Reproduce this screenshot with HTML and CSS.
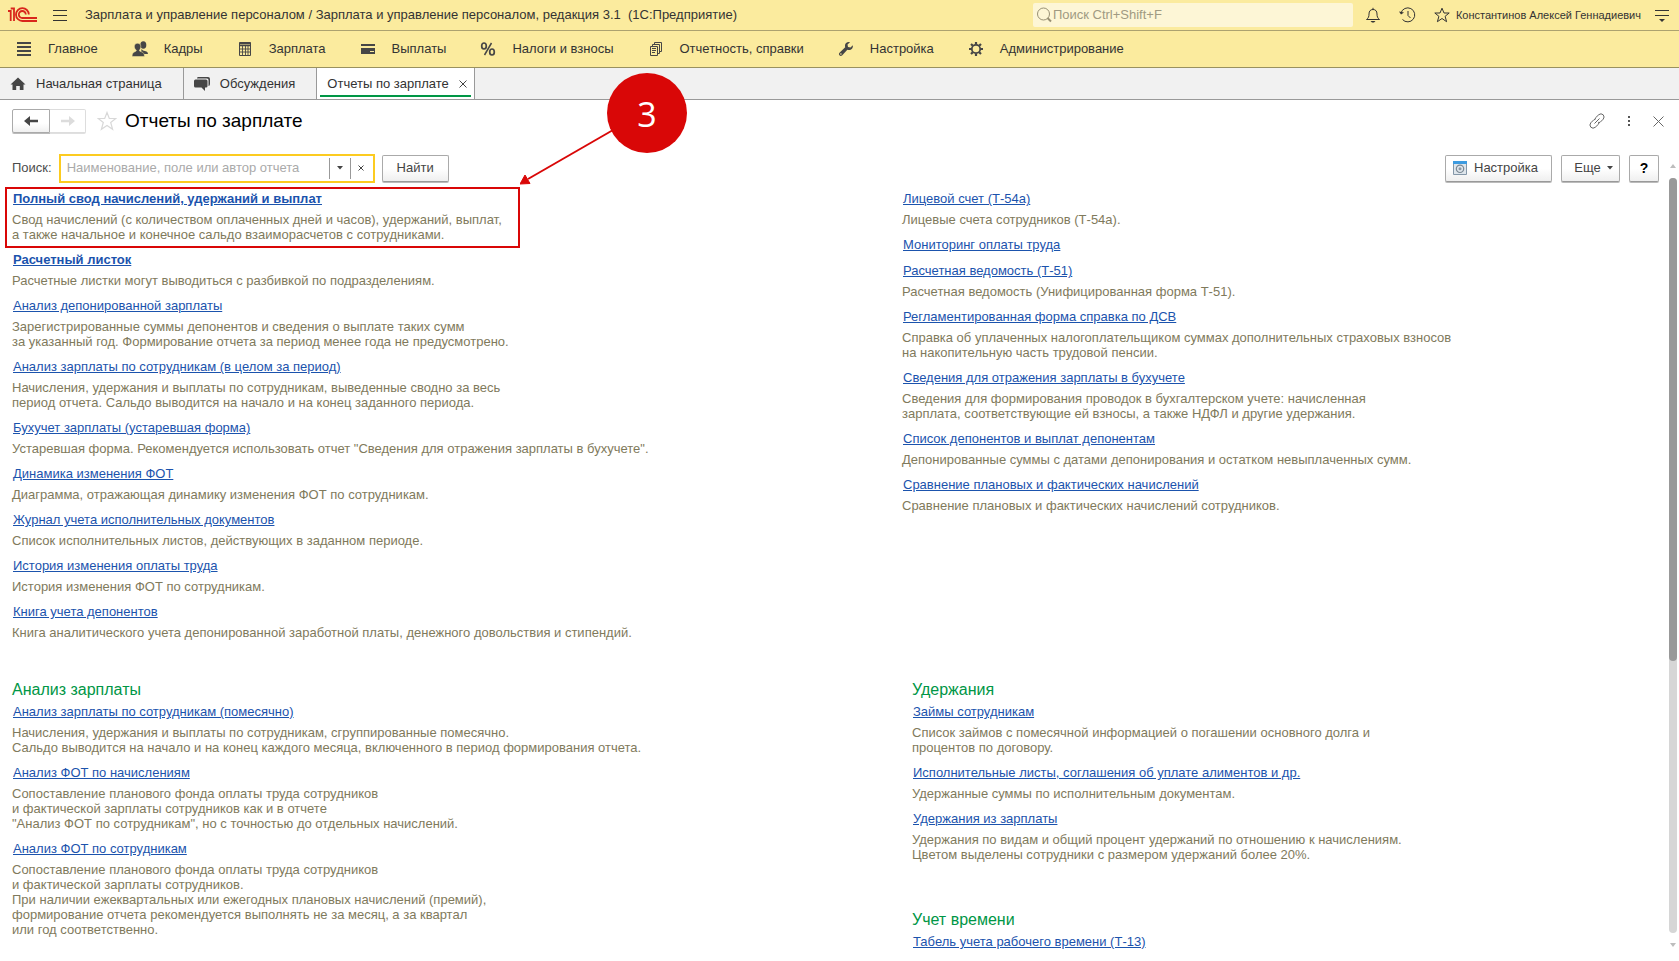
FILE: index.html
```html
<!DOCTYPE html>
<html lang="ru">
<head>
<meta charset="utf-8">
<title>Отчеты по зарплате</title>
<link rel="stylesheet" href="styles.css">
</head>
<body>
<div class="app">
  <header class="topbar">
    <svg class="logo" width="30" height="16" viewBox="0 0 30 16" fill="none" stroke="#d9261c" stroke-width="1.800"><path d="M0 4H2.700V14M2.700 1.500H6V14"/><path d="M20.800 7.500A6.400 6.400 0 1 0 14.500 14H29"/><path d="M17.800 7.500A3.500 3.500 0 1 0 14.500 11H29"/></svg>
    <button class="icon-btn menu-btn" aria-label="Меню"><svg width="14" height="12" viewBox="0 0 14 12" stroke="#333" stroke-width="1"><path d="M0 1.500H14M0 6.500H14M0 11.500H14"/></svg></button>
    <div class="app-title">Зарплата и управление персоналом / Зарплата и управление персоналом, редакция 3.1 &nbsp;(1С:Предприятие)</div>
    <label class="global-search">
      <svg width="16" height="16" viewBox="0 0 16 16" fill="none" stroke="#989074"><circle cx="7.500" cy="7" r="6"/><path d="M11.500 11L15 14.500" stroke-width="2"/></svg>
      <input type="text" placeholder="Поиск Ctrl+Shift+F" aria-label="Поиск">
    </label>
    <div class="top-actions">
      <button class="icon-btn" aria-label="Уведомления"><svg width="16" height="16" viewBox="0 0 16 16" fill="none" stroke="#333"><path d="M1.500 12.500C3.500 11 4 9.500 4 7C4 4 5.500 2.500 8 2.500S12 4 12 7C12 9.500 12.500 11 14.500 12.500ZM8 .8V2.500"/><path d="M5.500 14H10.500L9 15.500H7Z" fill="#333" stroke="none"/></svg></button>
      <button class="icon-btn" aria-label="История"><svg width="17" height="16" viewBox="0 0 17 16" fill="none" stroke="#333"><path d="M2 6A7 7 0 1 1 3.500 12.500M9 4V8.500L11.500 11"/><path d="M0 4.500L2 7.500L5 5.500Z" fill="#333" stroke="none"/></svg></button>
      <button class="icon-btn" aria-label="Избранное"><svg width="16" height="16" viewBox="0 0 16 16" fill="none" stroke="#333"><path d="M8 1.200L10 6H15.200L11.100 9.300L12.600 14.700L8 11.500L3.400 14.700L4.900 9.300L.8 6H6Z"/></svg></button>
    </div>
    <a class="user" href="#">Константинов Алексей Геннадиевич</a>
    <button class="icon-btn service-btn" aria-label="Сервис"><svg width="14" height="13" viewBox="0 0 14 13" stroke="#333"><path d="M0 1.500H14M0 6.500H14"/><path d="M4 10H10L7 13Z" fill="#333" stroke="none"/></svg></button>
  </header>

  <nav class="sections">
    <a href="#" class="section"><svg width="16" height="16" viewBox="0 0 16 16" stroke="#464646" stroke-width="2"><path d="M1 2H15M1 6H15M1 10H15M1 14H15"/></svg>Главное</a>
    <a href="#" class="section"><svg width="16" height="16" viewBox="0 0 16 16" fill="#464646"><ellipse cx="11.300" cy="4" rx="3" ry="3.800"/><path d="M9.500 8L11 9.500L14.500 10.500Q16 11 16 13H9Z"/><path d="M2.400 5.500C2.400 3.400 3.600 2.300 5.600 2.300S8.800 3.400 8.800 5.500C8.800 7.500 8 8.500 7.500 9V10L11 11.500Q12.500 12.500 12.500 15.500H0Q0 12.500 1.500 11.500L4.200 10V9C3.400 8.500 2.400 7.500 2.400 5.500Z" stroke="#fbeb9e" stroke-width=".5"/></svg>Кадры</a>
    <a href="#" class="section"><svg width="16" height="16" viewBox="0 0 16 16" fill="none" stroke="#464646"><path d="M2.500 1.500H13.500V14.500H2.500Z"/><path d="M2 2.500H14M2 4.500H14" stroke-width="1.400"/><path d="M5.500 5V14M8.500 5V14M11 5V14M3 8H13M3 11H13" stroke-width=".9"/></svg>Зарплата</a>
    <a href="#" class="section"><svg width="16" height="16" viewBox="0 0 16 16" fill="#464646"><path d="M1 3H15V5H1ZM1 7H15V13H1Z"/><path d="M10 10.500H14" stroke="#fbeb9e"/></svg>Выплаты</a>
    <a href="#" class="section"><svg width="16" height="16" viewBox="0 0 16 16" fill="none" stroke="#464646"><ellipse cx="4" cy="5" rx="2.300" ry="3" stroke-width="1.700"/><ellipse cx="12" cy="11" rx="2.300" ry="3" stroke-width="1.700"/><path d="M11.500 2L4.500 14" stroke-width="1.500"/></svg>Налоги и взносы</a>
    <a href="#" class="section"><svg width="16" height="16" viewBox="0 0 16 16" fill="none" stroke="#464646"><path d="M2.500 5.500H9.500V14.500H2.500ZM4.500 5V3.500H11.500V12.500H10M6.500 3V1.500H13.500V10.500H12M4 7.500H8M4 9.500H8M4 11.500H7"/></svg>Отчетность, справки</a>
    <a href="#" class="section"><svg width="16" height="16" viewBox="0 0 16 16"><path d="M14.800 4.300L12.500 6.500L10 6L9.500 3.500L12 1.200C9.500.5 7 2 7 4.500C7 5.200 7 5.800 7.200 6.300L1.500 11.700C.5 12.700 1 14 1.700 14.600C2.500 15.200 3.500 15 4.300 14.200L9.300 8.800C12.500 10 15.500 7.500 14.800 4.300Z" fill="#464646"/><circle cx="2.900" cy="13" r=".8" fill="#fbeb9e"/></svg>Настройка</a>
    <a href="#" class="section"><svg width="16" height="16" viewBox="0 0 16 16" fill="none" stroke="#464646"><circle cx="8" cy="8" r="4.200" stroke-width="1.800"/><path d="M8 1V3.500M8 12.500V15M1 8H3.500M12.500 8H15M3 3L4.800 4.800M11.200 11.200L13 13M13 3L11.200 4.800M4.800 11.200L3 13" stroke-width="2.200"/></svg>Администрирование</a>
  </nav>

  <div class="tabs">
    <a href="#" class="tab"><svg width="16" height="14" viewBox="0 0 16 14" fill="#464646"><path d="M8 .5L15.500 7.500H13.500V13H9.800V9H6.200V13H2.500V7.500H.5Z"/></svg>Начальная страница</a>
    <a href="#" class="tab"><svg width="16" height="16" viewBox="0 0 16 16" fill="#464646"><path d="M4 1H14Q16 1 16 3V8Q16 10 14.500 10V4Q14.500 2.500 13 2.500H3Q3 1 4 1Z"/><path d="M1.500 3.500H12Q13.500 3.500 13.500 5V10Q13.500 11.500 12 11.500H11V15L7.500 11.500H1.500Q0 11.500 0 10V5Q0 3.500 1.500 3.500Z"/></svg>Обсуждения</a>
    <div class="tab tab-active"><span>Отчеты по зарплате</span><button class="icon-btn" aria-label="Закрыть вкладку"><svg width="8" height="8" viewBox="0 0 8 8" stroke="#444"><path d="M.5 .5L7.500 7.500M7.500 .5L.5 7.500"/></svg></button></div>
  </div>

  <main class="page">
    <div class="title-row">
      <div class="history">
        <button class="hist-btn" aria-label="Назад"><svg width="14" height="10" viewBox="0 0 14 10" fill="#464646"><path d="M0 5L6 0V3.700H14V6.300H6V10Z"/></svg></button>
        <button class="hist-btn hist-off" aria-label="Вперед" disabled><svg width="14" height="10" viewBox="0 0 14 10" fill="#dcdcdc"><path d="M14 5L8 0V3.700H0V6.300H8V10Z"/></svg></button>
      </div>
      <button class="icon-btn" aria-label="В избранное"><svg width="20" height="20" viewBox="0 0 20 20" fill="none" stroke="#d8d8d8" stroke-width="1.200"><path d="M10 1.500L12.300 7.500H18.800L13.700 11.500L15.600 18.300L10 14.500L4.400 18.300L6.300 11.500L1.200 7.500H7.700Z"/></svg></button>
      <h1>Отчеты по зарплате</h1>
      <div class="page-actions">
        <button class="icon-btn" aria-label="Ссылка"><svg width="16" height="16" viewBox="0 0 16 16" fill="none" stroke="#666"><path d="M6.300 6.300L6.300 5L9.800 1.700Q12 -.2 14.200 1.800Q16 4 14.200 6.200L11 9.400H9.200M9.700 9.700V11L6.200 14.300Q4 16.200 1.800 14.200Q0 12 1.800 9.800L5 6.600H6.200M5.500 10.500L10.500 5.500"/></svg></button>
        <button class="icon-btn" aria-label="Дополнительно"><svg width="4" height="12" viewBox="0 0 4 12" fill="#555"><path d="M1 1H3V3H1ZM1 5H3V7H1ZM1 9H3V11H1Z"/></svg></button>
        <button class="icon-btn" aria-label="Закрыть"><svg width="11" height="11" viewBox="0 0 11 11" stroke="#666"><path d="M.5 .5L10.500 10.500M10.500 .5L.5 10.500"/></svg></button>
      </div>
    </div>

    <div class="toolbar">
      <label for="q">Поиск:</label>
      <div class="field">
        <input id="q" type="text" placeholder="Наименование, поле или автор отчета">
        <button class="field-btn" aria-label="Выбрать"><svg width="6" height="4" viewBox="0 0 6 4" fill="#444"><path d="M0 0H6L3 3.500Z"/></svg></button>
        <button class="field-btn" aria-label="Очистить"><svg width="6" height="6" viewBox="0 0 6 6" stroke="#444"><path d="M.5 .5L5.500 5.500M5.500 .5L.5 5.500"/></svg></button>
      </div>
      <button class="btn btn-find">Найти</button>
      <div class="toolbar-right">
        <button class="btn btn-setup"><svg width="14" height="14" viewBox="0 0 14 14" fill="none"><path d="M.5 1.500H13.500V13.500H.5Z" fill="#dfe6ec" stroke="#8497a8"/><path d="M0 0H14V3H0Z" fill="#3d9be0"/><circle cx="7" cy="7.800" r="3.700" stroke="#7a8894" stroke-width="1.200"/><circle cx="7" cy="7.800" r="1.500" fill="#8c98a4"/></svg>Настройка</button>
        <button class="btn btn-more">Еще<svg width="6" height="4" viewBox="0 0 6 4" fill="#444"><path d="M0 0H6L3 3.500Z"/></svg></button>
        <button class="btn btn-help">?</button>
      </div>
    </div>

    <div class="reports">
      <div class="columns columns-main">
        <ul class="list">
          <li class="marked"><a class="bold" href="#">Полный свод начислений, удержаний и выплат</a><p>Свод начислений (с количеством оплаченных дней и часов), удержаний, выплат,<br>а также начальное и конечное сальдо взаиморасчетов с сотрудниками.</p></li>
          <li><a class="bold" href="#">Расчетный листок</a><p>Расчетные листки могут выводиться с разбивкой по подразделениям.</p></li>
          <li><a href="#">Анализ депонированной зарплаты</a><p>Зарегистрированные суммы депонентов и сведения о выплате таких сумм<br>за указанный год. Формирование отчета за период менее года не предусмотрено.</p></li>
          <li><a href="#">Анализ зарплаты по сотрудникам (в целом за период)</a><p>Начисления, удержания и выплаты по сотрудникам, выведенные сводно за весь<br>период отчета. Сальдо выводится на начало и на конец заданного периода.</p></li>
          <li><a href="#">Бухучет зарплаты (устаревшая форма)</a><p>Устаревшая форма. Рекомендуется использовать отчет "Сведения для отражения зарплаты в бухучете".</p></li>
          <li><a href="#">Динамика изменения ФОТ</a><p>Диаграмма, отражающая динамику изменения ФОТ по сотрудникам.</p></li>
          <li><a href="#">Журнал учета исполнительных документов</a><p>Список исполнительных листов, действующих в заданном периоде.</p></li>
          <li><a href="#">История изменения оплаты труда</a><p>История изменения ФОТ по сотрудникам.</p></li>
          <li><a href="#">Книга учета депонентов</a><p>Книга аналитического учета депонированной заработной платы, денежного довольствия и стипендий.</p></li>
        </ul>
        <ul class="list">
          <li><a href="#">Лицевой счет (Т-54а)</a><p>Лицевые счета сотрудников (Т-54а).</p></li>
          <li><a href="#">Мониторинг оплаты труда</a></li>
          <li><a href="#">Расчетная ведомость (Т-51)</a><p>Расчетная ведомость (Унифицированная форма Т-51).</p></li>
          <li><a href="#">Регламентированная форма справка по ДСВ</a><p>Справка об уплаченных налогоплательщиком суммах дополнительных страховых взносов<br>на накопительную часть трудовой пенсии.</p></li>
          <li><a href="#">Сведения для отражения зарплаты в бухучете</a><p>Сведения для формирования проводок в бухгалтерском учете: начисленная<br>зарплата, соответствующие ей взносы, а также НДФЛ и другие удержания.</p></li>
          <li><a href="#">Список депонентов и выплат депонентам</a><p>Депонированные суммы с датами депонирования и остатком невыплаченных сумм.</p></li>
          <li><a href="#">Сравнение плановых и фактических начислений</a><p>Сравнение плановых и фактических начислений сотрудников.</p></li>
        </ul>
      </div>
      <div class="columns columns-groups">
        <section class="group">
          <h2>Анализ зарплаты</h2>
          <ul class="list">
            <li><a href="#">Анализ зарплаты по сотрудникам (помесячно)</a><p>Начисления, удержания и выплаты по сотрудникам, сгруппированные помесячно.<br>Сальдо выводится на начало и на конец каждого месяца, включенного в период формирования отчета.</p></li>
            <li><a href="#">Анализ ФОТ по начислениям</a><p>Сопоставление планового фонда оплаты труда сотрудников<br>и фактической зарплаты сотрудников как и в отчете<br>"Анализ ФОТ по сотрудникам", но с точностью до отдельных начислений.</p></li>
            <li><a href="#">Анализ ФОТ по сотрудникам</a><p>Сопоставление планового фонда оплаты труда сотрудников<br>и фактической зарплаты сотрудников.<br>При наличии ежеквартальных или ежегодных плановых начислений (премий),<br>формирование отчета рекомендуется выполнять не за месяц, а за квартал<br>или год соответственно.</p></li>
          </ul>
        </section>
        <div class="stack">
          <section class="group">
            <h2>Удержания</h2>
            <ul class="list">
              <li><a href="#">Займы сотрудникам</a><p>Список займов с помесячной информацией о погашении основного долга и<br>процентов по договору.</p></li>
              <li><a href="#">Исполнительные листы, соглашения об уплате алиментов и др.</a><p>Удержанные суммы по исполнительным документам.</p></li>
              <li><a href="#">Удержания из зарплаты</a><p>Удержания по видам и общий процент удержаний по отношению к начислениям.<br>Цветом выделены сотрудники с размером удержаний более 20%.</p></li>
            </ul>
          </section>
          <section class="group">
            <h2>Учет времени</h2>
            <ul class="list">
              <li><a href="#">Табель учета рабочего времени (Т-13)</a></li>
            </ul>
          </section>
        </div>
      </div>
    </div>
    <div class="scrollbar">
      <svg width="6" height="4" viewBox="0 0 6 4" fill="#bdbdbd"><path d="M3 0L6 4H0Z"/></svg>
      <div class="track"><div class="thumb"></div></div>
      <svg width="6" height="4" viewBox="0 0 6 4" fill="#bdbdbd"><path d="M0 0H6L3 4Z"/></svg>
    </div>
  </main>

  <div class="callout">
    <svg width="110" height="80" viewBox="0 0 110 80"><path d="M100 17L8 70" stroke="#d90707" stroke-width="2"/><path d="M0 75L5 66L10 74.500Z" fill="#d90707" stroke="#d90707"/></svg>
    <div class="callout-number">3</div>
  </div>
</div>
</body>
</html>
```

FILE: styles.css
```css
* { box-sizing: border-box; }

body {
  margin: 0;
  background: #fff;
  color: #333;
  font: 13px/16px "Liberation Sans", Arial, sans-serif;
}

h1, h2, p, ul { margin: 0; padding: 0; }
ul { list-style: none; }
svg { display: block; flex: none; }
button, input { font: inherit; color: inherit; }
button { cursor: pointer; }

.app {
  position: relative;
  display: flex;
  flex-direction: column;
  min-height: 100vh;
  overflow: hidden;
}

.icon-btn {
  display: flex;
  align-items: center;
  justify-content: center;
  padding: 0;
  border: 0;
  background: none;
}

/* Top bar */
.topbar {
  display: flex;
  align-items: center;
  height: 31px;
  padding: 0 10px 0 8px;
  background: #fbeb9e;
  border-bottom: 1px solid #aca26f;
}
.menu-btn { margin: 0 18px 0 15px; }
.app-title { flex: 1; white-space: nowrap; }
.global-search {
  display: flex;
  align-items: center;
  gap: 1px;
  width: 320px;
  height: 24px;
  padding: 0 3px;
  border-radius: 2px;
  background: #fdf6d6;
}
.global-search input {
  flex: 1;
  min-width: 0;
  padding: 0;
  border: 0;
  outline: 0;
  background: none;
}
.global-search input::placeholder { color: #a09a82; opacity: 1; }
.top-actions { display: flex; gap: 18px; margin: 0 6px 0 12px; }
.user { color: #333; font-size: 11px; text-decoration: none; white-space: nowrap; }
.service-btn { margin-left: 14px; }

/* Sections */
.sections {
  display: flex;
  align-items: center;
  gap: 34px;
  height: 37px;
  padding: 0 16px;
  background: #fbeb9e;
  border-bottom: 1px solid #99915f;
}
.section {
  display: flex;
  align-items: center;
  gap: 16px;
  color: #333;
  text-decoration: none;
  white-space: nowrap;
}

/* Tabs */
.tabs {
  display: flex;
  height: 32px;
  background: #f1f1f1;
  border-bottom: 1px solid #999;
}
.tab {
  display: flex;
  align-items: center;
  gap: 10px;
  padding: 0 21px 0 10px;
  border-right: 1px solid #999;
  color: #333;
  text-decoration: none;
  white-space: nowrap;
}
.tab-active { position: relative; padding-right: 7px; background: #fff; }
.tab-active::after {
  content: "";
  position: absolute;
  left: 3px;
  right: 3px;
  bottom: 2px;
  height: 2px;
  background: #009646;
}

/* Page */
.page {
  position: relative;
  flex: 1;
  padding: 9px 15px 10px 12px;
}
.title-row { display: flex; align-items: center; height: 24px; }
.history { display: flex; margin-right: 11px; }
.hist-btn {
  display: flex;
  align-items: center;
  justify-content: center;
  width: 38px;
  height: 24px;
  padding: 0;
  border: 1px solid #aaa;
  border-radius: 2px 0 0 2px;
  background: linear-gradient(#fff 60%, #f0f0f0);
  box-shadow: 0 1px 0 #bbb;
}
.hist-off {
  width: 36px;
  border-color: #ddd;
  border-left: 0;
  border-radius: 0 2px 2px 0;
  background: #fff;
  box-shadow: 0 1px 0 #e0e0e0;
}
h1 { margin-left: 8px; color: #000; font-size: 19px; line-height: 24px; font-weight: 400; }
.page-actions { display: flex; align-items: center; gap: 22px; margin-left: auto; }

.toolbar { display: flex; align-items: center; height: 30px; margin-top: 20px; }
.toolbar label { margin-right: 7px; color: #4c4c4c; }
.field {
  display: flex;
  align-items: center;
  width: 316px;
  height: 29px;
  padding-right: 2px;
  border: 2px solid #fccb20;
  background: #fff;
}
.field input {
  flex: 1;
  min-width: 0;
  padding: 0 6px;
  border: 0;
  outline: 0;
  background: none;
}
.field input::placeholder { color: #aaa; opacity: 1; }
.field-btn {
  display: flex;
  align-items: center;
  justify-content: center;
  width: 21px;
  height: 21px;
  padding: 0;
  border: 0;
  border-left: 1px solid #999;
  background: none;
}
.btn {
  display: flex;
  align-items: center;
  justify-content: center;
  height: 27px;
  padding: 0 13px;
  border: 1px solid #aaa;
  border-bottom-color: #999;
  border-radius: 2px;
  background: linear-gradient(#fff 50%, #efefef);
  box-shadow: 0 1px 0 #bbb;
  color: #444;
  white-space: nowrap;
}
.btn-find { width: 67px; margin-left: 7px; }
.toolbar-right { display: flex; gap: 9px; margin-left: auto; margin-right: 5px; }
.btn-setup { justify-content: flex-start; gap: 7px; width: 107px; padding: 0 7px; }
.btn-more { gap: 6px; width: 59px; padding: 0 0 0 6px; }
.btn-help { width: 30px; padding: 0; color: #000; font-weight: 700; font-size: 14px; }

/* Reports */
.reports { padding-top: 8px; }
.columns { display: grid; }
.columns-main { grid-template-columns: 890fr 762fr; }
.columns-groups { grid-template-columns: 900fr 752fr; margin-top: 41px; }
.list { display: flex; flex-direction: column; gap: 10px; }
.list li { position: relative; }
.list a { display: table; padding-left: 1px; color: #1b53ad; line-height: 16px; }
.list .bold { font-weight: 700; }
.list p { margin-top: 5px; color: #7f7a5c; line-height: 15px; white-space: nowrap; }
.marked::before {
  content: "";
  position: absolute;
  box-sizing: border-box;
  left: -7px;
  top: -4px;
  width: 515px;
  bottom: -6px;
  border: 2px solid #d90707;
  pointer-events: none;
}
h2 { margin-bottom: 5px; color: #009646; font-size: 16px; line-height: 18px; font-weight: 400; }
.stack { display: flex; flex-direction: column; gap: 49px; }

/* Scroll bar */
.scrollbar {
  position: absolute;
  top: 64px;
  right: 2px;
  bottom: 14px;
  width: 8px;
  display: flex;
  flex-direction: column;
  align-items: center;
  gap: 10px;
}
.track { flex: 1; width: 8px; border-radius: 4px; background: #d6d6d6; }
.thumb { height: 64%; border-radius: 4px; background: #999; }

/* Callout */
.callout { position: absolute; left: 520px; top: 73px; width: 167px; height: 116px; pointer-events: none; }
.callout svg { position: absolute; left: 0; bottom: 0; }
.callout-number {
  position: absolute;
  right: 0;
  top: 0;
  width: 80px;
  height: 80px;
  border-radius: 50%;
  background: #d90707;
  color: #fff;
  font: 500 34px/82px "Open Sans", "Noto Sans", sans-serif;
  text-align: center;
}
```
